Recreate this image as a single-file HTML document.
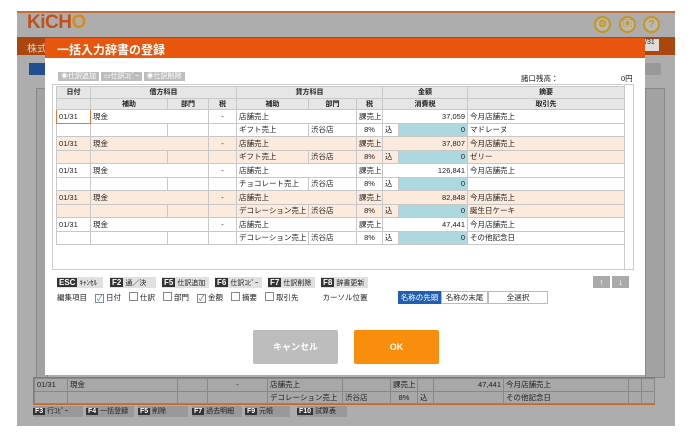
<!DOCTYPE html>
<html><head><meta charset="utf-8"><style>
*{box-sizing:border-box;margin:0;padding:0}
body{width:693px;height:445px;background:#fff;position:relative;overflow:hidden;font-family:"Liberation Sans","Noto Sans CJK JP",sans-serif;font-size:8px;color:#222}
.abs{position:absolute}
#app{left:17px;top:11px;width:658px;height:415px;background:#adadad;border-top:2px solid #c0703f}
.logo{left:27px;top:12px;font-size:19px;font-weight:bold;color:#c2501a;letter-spacing:-0.5px}
.ic{width:17px;height:17px;border-radius:50%;border:2px solid #c7961a;background:#b8b8b8;top:16px;color:#c7961a;font-size:10px;font-weight:bold;text-align:center;line-height:13px}
#modal{left:45px;top:38px;width:600px;height:337px;background:#fff}
.mh{left:0;top:0;width:600px;height:20px;background:#e8560e;color:#fff;font-size:12px;font-weight:bold;padding:3px 0 0 12px}
table{border-collapse:collapse;table-layout:fixed}
td{border:1px solid #c8c8c8;height:13.5px;padding:0 2px;white-space:nowrap;overflow:hidden;font-size:7.5px}
.h td{background:#e6e6e6;font-weight:bold;text-align:center;height:11.5px;font-size:7px}
.p td{background:#fcebdc}
.r{text-align:right}.c{text-align:center}
.bl{background:#aed8e0!important}
.fk{top:239px;height:11px;font-size:7px;line-height:11px;background:#e0e0e0;padding-right:4px;white-space:nowrap}
.fk b{background:#333;color:#fff;padding:0 2px;margin-right:2px;font-size:8px}
.cb{display:inline-block;width:9px;height:9px;border:1px solid #888;vertical-align:-1px;margin:0 2px 0 8px;font-size:8px;line-height:7px;color:#3a7dc8;text-align:center}
.bt{top:253px;height:13px;border:1px solid #bbb;font-size:7.5px;text-align:center;line-height:11px;white-space:nowrap}
.btm td{border-color:#888;background:#a8a8a8;height:12.5px}
.bk{font-size:7px;line-height:11px;white-space:nowrap;top:406px;height:11px;background:#999}
.bk b{background:#333;color:#fff;padding:0 2px;margin-right:2px}
</style></head><body>
<div id="app" class="abs"></div>
<div class="abs logo">KiCH<span style="color:#d98a18">O</span></div>
<div class="abs ic" style="left:594px">⚙</div>
<div class="abs ic" style="left:619px">▣</div>
<div class="abs ic" style="left:643px">?</div>
<div class="abs" style="left:17px;top:37px;width:658px;height:18px;background:#a9470f;color:#e8d0c0;font-size:10px;padding:3px 0 0 10px">株式</div>
<div class="abs" style="left:645px;top:39px;width:14px;height:12px;background:#ddd;font-size:7px">/31</div>
<div class="abs" style="left:29px;top:63px;width:16px;height:12px;background:#1f4f8f"></div>
<div class="abs" style="left:645px;top:63px;width:16px;height:12px;background:#999;border-radius:2px"></div>
<div class="abs" style="left:36px;top:88px;width:12px;height:290px;background:#a2a2a2;border:1px solid #888"></div>
<div class="abs" style="left:645px;top:88px;width:20px;height:290px;background:#a2a2a2;border:1px solid #888"></div>

<div class="abs" style="left:33px;top:377px;width:622px;height:28px;border:1px solid #c06a30"></div>
<table class="abs btm" style="left:34px;top:378px;width:620px">
<colgroup><col width="33"><col width="110"><col width="30"><col width="60"><col width="75"><col width="48"><col width="27"><col width="16"><col width="70"><col width="125"><col width="13"><col width="13"></colgroup>
<tr><td>01/31</td><td>現金</td><td></td><td class="c">-</td><td>店舗売上</td><td></td><td>課売上</td><td></td><td class="r">47,441</td><td>今月店舗売上</td><td></td><td></td></tr>
<tr><td></td><td></td><td></td><td></td><td>デコレーション売上</td><td>渋谷店</td><td class="c">8%</td><td>込</td><td></td><td>その他記念日</td><td></td><td></td></tr></table>
<div class="abs bk" style="left:33px;width:50px"><b>F3</b>行ｺﾋﾟｰ</div>
<div class="abs bk" style="left:86px;width:48px"><b>F4</b>一括登録</div>
<div class="abs bk" style="left:138px;width:50px"><b>F5</b>削除</div>
<div class="abs bk" style="left:192px;width:50px"><b>F7</b>過去明細</div>
<div class="abs bk" style="left:245px;width:45px"><b>F9</b>元帳</div>
<div class="abs bk" style="left:297px;width:50px"><b>F10</b>試算表</div>

<div id="modal" class="abs">
<div class="abs mh">一括入力辞書の登録</div>
<div class="abs" style="left:13px;top:33px;font-size:7px;color:#fff;white-space:nowrap">
<span style="background:#bdbdbd;padding:1px 3px;margin-right:2px">◉仕訳追加</span><span style="background:#bdbdbd;padding:1px 3px;margin-right:2px">▭仕訳ｺﾋﾟｰ</span><span style="background:#bdbdbd;padding:1px 3px">◉仕訳削除</span></div>
<div class="abs" style="left:476px;top:35px;font-size:7.5px">諸口残高：</div>
<div class="abs" style="left:576px;top:35px;font-size:7.5px">0円</div>
<div class="abs" style="left:7px;top:46px;width:582px;height:186px;border:1px solid #ccc"></div>
<div class="abs" style="left:579px;top:47px;width:9px;height:184px;border-left:1px solid #ccc"></div>
<table class="abs" style="left:11px;top:48px;width:568px">
<colgroup><col width="34"><col width="77"><col width="41"><col width="28"><col width="72"><col width="48"><col width="26"><col width="16"><col width="69"><col width="157"></colgroup>
<tr class="h"><td>日付</td><td colspan="3">借方科目</td><td colspan="3">貸方科目</td><td colspan="2">金額</td><td>摘要</td></tr>
<tr class="h"><td></td><td>補助</td><td>部門</td><td>税</td><td>補助</td><td>部門</td><td>税</td><td colspan="2">消費税</td><td>取引先</td></tr>
<tr><td style="border:1.5px solid #e8763a">01/31</td><td colspan="2">現金</td><td class="c">-</td><td colspan="2">店舗売上</td><td>課売上</td><td colspan="2" class="r">37,059</td><td>今月店舗売上</td></tr>
<tr><td></td><td></td><td></td><td></td><td>ギフト売上</td><td>渋谷店</td><td class="c">8%</td><td>込</td><td class="r bl">0</td><td>マドレーヌ</td></tr>
<tr class="p"><td>01/31</td><td colspan="2">現金</td><td class="c">-</td><td colspan="2">店舗売上</td><td>課売上</td><td colspan="2" class="r">37,807</td><td>今月店舗売上</td></tr>
<tr class="p"><td></td><td></td><td></td><td></td><td>ギフト売上</td><td>渋谷店</td><td class="c">8%</td><td>込</td><td class="r bl">0</td><td>ゼリー</td></tr>
<tr><td>01/31</td><td colspan="2">現金</td><td class="c">-</td><td colspan="2">店舗売上</td><td>課売上</td><td colspan="2" class="r">126,841</td><td>今月店舗売上</td></tr>
<tr><td></td><td></td><td></td><td></td><td>チョコレート売上</td><td>渋谷店</td><td class="c">8%</td><td>込</td><td class="r bl">0</td><td></td></tr>
<tr class="p"><td>01/31</td><td colspan="2">現金</td><td class="c">-</td><td colspan="2">店舗売上</td><td>課売上</td><td colspan="2" class="r">82,848</td><td>今月店舗売上</td></tr>
<tr class="p"><td></td><td></td><td></td><td></td><td>デコレーション売上</td><td>渋谷店</td><td class="c">8%</td><td>込</td><td class="r bl">0</td><td>誕生日ケーキ</td></tr>
<tr><td>01/31</td><td colspan="2">現金</td><td class="c">-</td><td colspan="2">店舗売上</td><td>課売上</td><td colspan="2" class="r">47,441</td><td>今月店舗売上</td></tr>
<tr><td></td><td></td><td></td><td></td><td>デコレーション売上</td><td>渋谷店</td><td class="c">8%</td><td>込</td><td class="r bl">0</td><td>その他記念日</td></tr>
</table>
<div class="abs fk" style="left:12px;width:46px"><b>ESC</b>ｷｬﾝｾﾙ</div>
<div class="abs fk" style="left:65px;width:46px"><b>F2</b>通／決</div>
<div class="abs fk" style="left:117px"><b>F5</b>仕訳追加</div>
<div class="abs fk" style="left:170px"><b>F6</b>仕訳ｺﾋﾟｰ</div>
<div class="abs fk" style="left:223px"><b>F7</b>仕訳削除</div>
<div class="abs fk" style="left:276px"><b>F8</b>辞書更新</div>
<div class="abs" style="left:548px;top:238px;width:17px;height:12px;background:#aaa;color:#fff;text-align:center;font-size:9px;line-height:12px">↑</div>
<div class="abs" style="left:567px;top:238px;width:17px;height:12px;background:#aaa;color:#fff;text-align:center;font-size:9px;line-height:12px">↓</div>
<div class="abs" style="left:12px;top:254px;font-size:7.5px;line-height:12px;white-space:nowrap">編集項目<span class="cb">✓</span>日付<span class="cb"></span>仕訳<span class="cb"></span>部門<span class="cb">✓</span>金額<span class="cb"></span>摘要<span class="cb"></span>取引先<span style="margin-left:24px">カーソル位置</span></div>
<div class="abs bt" style="left:353px;width:43px;background:#1f5fb0;color:#fff;border-color:#1f5fb0">名称の先頭</div>
<div class="abs bt" style="left:396px;width:47px">名称の末尾</div>
<div class="abs bt" style="left:443px;width:60px">全選択</div>
<div class="abs" style="left:208px;top:292px;width:85px;height:34px;background:#bdbdbd;border-radius:2px;color:#fff;font-weight:bold;font-size:9px;text-align:center;line-height:34px">キャンセル</div>
<div class="abs" style="left:309px;top:292px;width:85px;height:34px;background:#f98d0c;border-radius:2px;color:#fff;font-weight:bold;font-size:9px;text-align:center;line-height:34px">OK</div>
</div>
</body></html>
